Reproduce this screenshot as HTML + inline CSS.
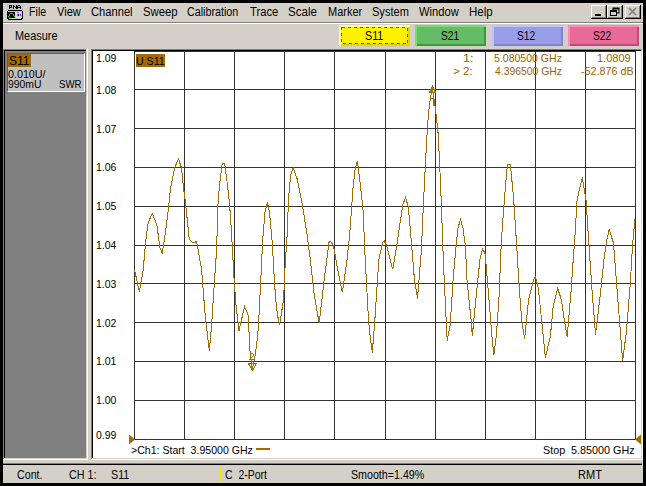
<!DOCTYPE html>
<html><head><meta charset="utf-8">
<style>
html,body{margin:0;padding:0;}
body{width:646px;height:486px;background:#000;position:relative;overflow:hidden;font-family:"Liberation Sans",sans-serif;}
.a{position:absolute;}
.t{position:absolute;white-space:nowrap;transform-origin:0 0;font-family:"Liberation Sans",sans-serif;}
</style></head><body>
<div class="a" style="left:3px;top:3px;width:640px;height:480px;background:#d4d0c8"></div>
<!-- menu separator -->
<div class="a" style="left:3px;top:22px;width:640px;height:1px;background:#808080"></div>
<div class="a" style="left:3px;top:23px;width:640px;height:1px;background:#fff"></div>
<!-- PNA icon -->
<svg class="a" style="left:0;top:0" width="30" height="24" viewBox="0 0 30 24" shape-rendering="crispEdges">
 <rect x="7" y="4" width="16" height="6" fill="#c4c4c4"/>
 <g fill="#000"><rect x="9" y="5" width="1" height="1"/><rect x="10" y="5" width="1" height="1"/><rect x="11" y="5" width="1" height="1"/><rect x="9" y="6" width="1" height="1"/><rect x="11" y="6" width="1" height="1"/><rect x="9" y="7" width="1" height="1"/><rect x="10" y="7" width="1" height="1"/><rect x="11" y="7" width="1" height="1"/><rect x="9" y="8" width="1" height="1"/><rect x="13" y="5" width="1" height="1"/><rect x="16" y="5" width="1" height="1"/><rect x="13" y="6" width="1" height="1"/><rect x="14" y="6" width="1" height="1"/><rect x="16" y="6" width="1" height="1"/><rect x="13" y="7" width="1" height="1"/><rect x="15" y="7" width="1" height="1"/><rect x="16" y="7" width="1" height="1"/><rect x="13" y="8" width="1" height="1"/><rect x="16" y="8" width="1" height="1"/><rect x="18" y="5" width="1" height="1"/><rect x="19" y="5" width="1" height="1"/><rect x="17" y="6" width="1" height="1"/><rect x="20" y="6" width="1" height="1"/><rect x="17" y="7" width="1" height="1"/><rect x="18" y="7" width="1" height="1"/><rect x="19" y="7" width="1" height="1"/><rect x="20" y="7" width="1" height="1"/><rect x="17" y="8" width="1" height="1"/><rect x="20" y="8" width="1" height="1"/></g>
 <rect x="7" y="10" width="16" height="10" fill="#000"/>
 <rect x="7" y="10" width="1" height="1" fill="#fff"/><rect x="22" y="10" width="1" height="1" fill="#fff"/>
 <rect x="8" y="11" width="14" height="1" fill="#c8c8c8"/>
 <rect x="15" y="12" width="7" height="6" fill="#d8d8d8"/>
 <rect x="8" y="16" width="1" height="1" fill="#00ff00"/><rect x="9" y="14" width="1" height="2" fill="#00ff00"/><rect x="10" y="13" width="3" height="1" fill="#00ff00"/><rect x="13" y="14" width="1" height="2" fill="#00ff00"/><rect x="14" y="16" width="1" height="1" fill="#00ff00"/>
 <rect x="15" y="14" width="1" height="2" fill="#ffff00"/><rect x="17" y="14" width="1" height="2" fill="#00ff00"/><rect x="18" y="14" width="1" height="2" fill="#0000ff"/><rect x="20" y="14" width="1" height="2" fill="#ff00ff"/>
 <rect x="17" y="12" width="2" height="1" fill="#888"/>
 <rect x="9" y="18" width="12" height="1" fill="#d0d0d0"/>
 <rect x="7" y="19" width="1" height="1" fill="#d4d0c8"/><rect x="22" y="19" width="1" height="1" fill="#d4d0c8"/>
</svg>
<!-- MDI buttons -->
<svg class="a" style="left:590px;top:4px" width="52" height="16" viewBox="0 0 52 16">
 <g id="btn">
 </g>
 <rect x="1" y="1" width="16" height="14" fill="#000"/><rect x="1" y="1" width="15" height="13" fill="#fff"/><rect x="2" y="2" width="14" height="12" fill="#808080"/><rect x="2" y="2" width="13" height="11" fill="#d4d0c8"/>
 <rect x="17" y="1" width="16" height="14" fill="#000"/><rect x="17" y="1" width="15" height="13" fill="#fff"/><rect x="18" y="2" width="14" height="12" fill="#808080"/><rect x="18" y="2" width="13" height="11" fill="#d4d0c8"/>
 <rect x="35" y="1" width="16" height="14" fill="#000"/><rect x="35" y="1" width="15" height="13" fill="#fff"/><rect x="36" y="2" width="14" height="12" fill="#808080"/><rect x="36" y="2" width="13" height="11" fill="#d4d0c8"/>
 <rect x="5" y="10" width="6" height="2" fill="#000"/>
 <rect x="23" y="4" width="6" height="5" fill="none" stroke="#000" stroke-width="1"/><rect x="23" y="4" width="6" height="1.5" fill="#000"/>
 <rect x="20.5" y="6.5" width="6" height="5" fill="#d4d0c8" stroke="#000" stroke-width="1"/><rect x="20.5" y="6.5" width="6" height="1.5" fill="#000"/>
 <path d="M39 4 L46 11 M46 4 L39 11" stroke="#808080" stroke-width="1.6"/>
</svg>
<!-- toolbar buttons -->
<div class="a" style="left:339px;top:25px;width:71px;height:21px;background:#fff200;box-shadow:inset 2px 2px 0 #ffff88, inset -2px -2px 0 #e6d600"></div>
<svg class="a" style="left:339px;top:25px" width="71" height="21" viewBox="0 0 71 21" shape-rendering="crispEdges">
<path d="M2.5 2.5 H68.5 V18.5 H2.5 Z" fill="none" stroke="#505878" stroke-width="1" stroke-dasharray="3 3"/>
</svg>
<div class="a" style="left:415px;top:25px;width:71px;height:21px;background:#66bb66;box-shadow:inset 2px 2px 0 #70e070, inset -2px -2px 0 #3a9a3a"></div>
<div class="a" style="left:492px;top:25px;width:71px;height:21px;background:#9a9ee8;box-shadow:inset 2px 2px 0 #c0c0ff, inset -2px -2px 0 #7c84cc"></div>
<div class="a" style="left:568px;top:25px;width:71px;height:21px;background:#e86a98;box-shadow:inset 2px 2px 0 #ff88b8, inset -2px -2px 0 #c04a78"></div>
<!-- left panel -->
<div class="a" style="left:3px;top:49px;width:85px;height:411px;background:#808080"></div>
<div class="a" style="left:3px;top:49px;width:84px;height:1px;background:#808080"></div>
<div class="a" style="left:4px;top:50px;width:82px;height:1px;background:#000"></div>
<div class="a" style="left:4px;top:50px;width:1px;height:408px;background:#000"></div>
<div class="a" style="left:86px;top:49px;width:1px;height:410px;background:#d4d0c8"></div>
<div class="a" style="left:87px;top:49px;width:1px;height:411px;background:#fff"></div>
<div class="a" style="left:4px;top:458px;width:83px;height:1px;background:#d4d0c8"></div>
<div class="a" style="left:3px;top:459px;width:85px;height:1px;background:#fff"></div>
<!-- info box -->
<div class="a" style="left:7px;top:53px;width:76px;height:37px;background:#c0c0c0;border-top:1px solid #606060;border-left:1px solid #606060;border-right:1px solid #fff;border-bottom:1px solid #fff"></div>
<div class="a" style="left:8px;top:54px;width:23px;height:13px;background:#a26c00"></div>
<!-- chart frame -->
<div class="a" style="left:91px;top:49px;width:552px;height:411px;background:#fff"></div>
<div class="a" style="left:91px;top:49px;width:551px;height:1px;background:#808080"></div>
<div class="a" style="left:91px;top:49px;width:1px;height:410px;background:#808080"></div>
<div class="a" style="left:92px;top:50px;width:549px;height:1px;background:#000"></div>
<div class="a" style="left:92px;top:50px;width:1px;height:408px;background:#000"></div>
<div class="a" style="left:641px;top:50px;width:1px;height:409px;background:#d4d0c8"></div>
<div class="a" style="left:92px;top:458px;width:550px;height:1px;background:#d4d0c8"></div>
<div class="a" style="left:642px;top:49px;width:1px;height:411px;background:#fff"></div>
<div class="a" style="left:91px;top:459px;width:552px;height:1px;background:#fff"></div>
<!-- status bar separator -->
<div class="a" style="left:3px;top:463px;width:639px;height:1px;background:#808080"></div>
<div class="a" style="left:3px;top:464px;width:639px;height:1px;background:#000"></div>
<div class="a" style="left:111px;top:467px;width:108px;height:13px;border:1px solid #f0e800"></div>
<!-- chart svg -->
<svg class="a" style="left:0;top:0" width="646" height="486" viewBox="0 0 646 486">
<rect x="136" y="54" width="29" height="13" fill="#a26c00"/>
<rect x="134" y="51" width="1" height="389" fill="#333"/>
<rect x="184" y="51" width="1" height="389" fill="#333"/>
<rect x="234" y="51" width="1" height="389" fill="#333"/>
<rect x="284" y="51" width="1" height="389" fill="#333"/>
<rect x="334" y="51" width="1" height="389" fill="#333"/>
<rect x="385" y="51" width="1" height="389" fill="#333"/>
<rect x="435" y="51" width="1" height="389" fill="#333"/>
<rect x="485" y="51" width="1" height="389" fill="#333"/>
<rect x="535" y="51" width="1" height="389" fill="#333"/>
<rect x="585" y="51" width="1" height="389" fill="#333"/>
<rect x="635" y="51" width="1" height="389" fill="#333"/>
<rect x="134" y="51" width="502" height="1" fill="#333"/>
<rect x="134" y="89" width="502" height="1" fill="#333"/>
<rect x="134" y="128" width="502" height="1" fill="#333"/>
<rect x="134" y="167" width="502" height="1" fill="#333"/>
<rect x="134" y="206" width="502" height="1" fill="#333"/>
<rect x="134" y="245" width="502" height="1" fill="#333"/>
<rect x="134" y="283" width="502" height="1" fill="#333"/>
<rect x="134" y="322" width="502" height="1" fill="#333"/>
<rect x="134" y="361" width="502" height="1" fill="#333"/>
<rect x="134" y="400" width="502" height="1" fill="#333"/>
<rect x="134" y="439" width="502" height="1" fill="#333"/>
<path d="M134.6 270.0 L139.3 291.6 L143.2 270.0 L145.7 241.0 L148.2 222.6 L152.3 213.4 L156.8 224.7 L159.9 247.3 L162.1 253.4 L163.7 244.3 L166.3 226.0 L168.7 206.5 L170.3 190.0 L172.5 178.0 L174.9 167.0 L178.5 158.8 L181.5 168.0 L183.5 187.6 L185.1 199.9 L187.6 222.9 L189.3 239.4 L192.5 242.3 L196.7 241.9 L201.6 269.7 L205.3 317.0 L209.3 350.5 L211.6 325.8 L213.2 300.0 L216.2 255.8 L217.3 229.7 L217.5 215.8 L218.3 197.7 L219.8 183.0 L222.2 163.2 L224.7 163.2 L227.2 183.0 L229.6 204.3 L231.3 229.7 L234.0 277.5 L236.0 305.3 L239.0 330.7 L244.5 306.5 L247.9 313.9 L248.6 322.3 L249.4 340.4 L250.2 353.6 L252.2 370.0 L255.2 355.3 L256.8 343.7 L258.5 325.6 L260.8 279.5 L262.7 239.9 L265.0 212.0 L267.3 202.4 L269.5 212.0 L271.7 236.0 L272.4 244.7 L274.0 274.3 L275.7 299.7 L277.5 315.0 L279.6 325.0 L283.6 299.3 L285.1 265.7 L287.1 236.0 L288.5 199.4 L290.5 176.0 L293.1 167.7 L297.4 179.6 L302.4 205.4 L307.3 236.0 L310.3 259.7 L314.3 295.4 L319.2 323.3 L324.2 279.5 L329.1 241.9 L330.7 241.5 L333.5 245.9 L337.0 265.7 L342.4 292.4 L347.0 259.7 L349.6 236.0 L352.9 189.5 L355.0 170.0 L357.3 160.8 L360.0 181.8 L363.0 209.5 L365.3 261.0 L368.5 319.6 L370.0 335.0 L372.3 352.5 L374.9 319.3 L378.8 259.8 L382.8 242.0 L384.2 240.8 L386.7 246.0 L392.7 269.3 L396.7 246.0 L400.6 219.4 L403.0 204.0 L405.6 197.6 L408.0 206.0 L409.6 221.0 L414.3 278.0 L417.5 298.5 L421.4 249.9 L423.8 195.7 L425.4 165.0 L427.4 127.5 L429.3 105.7 L432.3 86.5 L436.3 115.6 L438.3 135.4 L440.8 189.7 L443.2 256.0 L444.2 279.6 L447.2 340.6 L450.2 325.2 L453.1 279.6 L456.1 246.0 L458.0 228.0 L460.5 219.4 L463.0 228.0 L465.4 246.0 L467.0 279.6 L471.0 319.3 L472.3 335.7 L476.9 289.5 L479.9 259.8 L482.6 248.9 L485.2 253.9 L486.5 269.7 L489.0 299.5 L491.9 336.0 L493.9 355.2 L496.3 336.0 L498.9 299.5 L501.4 240.0 L503.8 207.5 L506.0 180.0 L507.5 164.3 L510.4 164.3 L513.7 199.5 L516.7 246.0 L518.7 279.6 L521.6 319.3 L524.6 339.3 L528.6 299.5 L533.5 279.6 L535.5 276.7 L538.5 289.5 L541.5 319.3 L545.4 357.6 L550.4 336.0 L553.3 305.4 L557.7 288.5 L561.3 299.5 L564.2 319.3 L567.2 336.7 L571.2 289.5 L573.2 259.8 L574.7 240.0 L577.1 199.5 L582.3 177.5 L586.0 199.5 L589.0 246.0 L592.0 289.5 L595.5 334.5 L600.9 289.5 L603.9 259.8 L606.8 240.0 L609.2 229.8 L613.5 243.0 L617.5 295.0 L622.6 360.8 L626.4 332.0 L630.5 280.6 L632.5 245.0 L635.0 219.3" fill="none" stroke="#a26c00" stroke-width="1" shape-rendering="crispEdges"/>
<polygon points="129,434.5 135,439.5 129,444.5" fill="#a26c00"/>
<polygon points="641,434.5 635,439.5 641,444.5" fill="#a26c00"/>
<rect x="256" y="448" width="14" height="2" fill="#a26c00"/>
<!-- marker 1 -->
<path d="M432.5 86.5 L429.5 92.5 L435.5 92.5 Z" fill="none" stroke="#a26c00" stroke-width="1" shape-rendering="crispEdges"/>
<path d="M430.5 98.5 L433.5 98.5 M433.5 97 L433.5 105.5" fill="none" stroke="#a26c00" stroke-width="1" shape-rendering="crispEdges"/>
<!-- marker 2 -->
<path d="M248.5 363.5 L256.5 363.5 L252.5 370.5 Z" fill="none" stroke="#a26c00" stroke-width="1" shape-rendering="crispEdges"/>
<path d="M249.5 354.5 L250.5 353.5 L252.5 353.5 L253.5 354.5 L253.5 355.5 L249.5 359.5 L254.5 359.5" fill="none" stroke="#a26c00" stroke-width="1" shape-rendering="crispEdges"/>
</svg>
<span class="t" style="left:29px;top:6.00px;font-size:12px;line-height:12px;color:#000;transform:scaleX(0.8889)" id="m_File">File</span>
<span class="t" style="left:57px;top:6.00px;font-size:12px;line-height:12px;color:#000;transform:scaleX(0.9231)" id="m_View">View</span>
<span class="t" style="left:91px;top:6.00px;font-size:12px;line-height:12px;color:#000;transform:scaleX(0.9302)" id="m_Channel">Channel</span>
<span class="t" style="left:143px;top:6.00px;font-size:12px;line-height:12px;color:#000;transform:scaleX(0.9429)" id="m_Sweep">Sweep</span>
<span class="t" style="left:187px;top:6.00px;font-size:12px;line-height:12px;color:#000;transform:scaleX(0.8929)" id="m_Calibration">Calibration</span>
<span class="t" style="left:250px;top:6.00px;font-size:12px;line-height:12px;color:#000;transform:scaleX(0.9333)" id="m_Trace">Trace</span>
<span class="t" style="left:288px;top:6.00px;font-size:12px;line-height:12px;color:#000;transform:scaleX(0.9655)" id="m_Scale">Scale</span>
<span class="t" style="left:328px;top:6.00px;font-size:12px;line-height:12px;color:#000;transform:scaleX(0.9167)" id="m_Marker">Marker</span>
<span class="t" style="left:372px;top:6.00px;font-size:12px;line-height:12px;color:#000;transform:scaleX(0.9211)" id="m_System">System</span>
<span class="t" style="left:419px;top:6.00px;font-size:12px;line-height:12px;color:#000;transform:scaleX(0.9302)" id="m_Window">Window</span>
<span class="t" style="left:469px;top:6.00px;font-size:12px;line-height:12px;color:#000;transform:scaleX(0.9565)" id="m_Help">Help</span>
<span class="t" style="left:15px;top:30.00px;font-size:12px;line-height:12px;color:#000;transform:scaleX(0.9111)" id="measure">Measure</span>
<span class="t" style="left:365px;top:30.00px;font-size:12px;line-height:12px;color:#000;transform:scaleX(0.8947)" id="b11">S11</span>
<span class="t" style="left:441px;top:30.00px;font-size:12px;line-height:12px;color:#000;transform:scaleX(0.8500)" id="b21">S21</span>
<span class="t" style="left:517px;top:30.00px;font-size:12px;line-height:12px;color:#000;transform:scaleX(0.8500)" id="b12">S12</span>
<span class="t" style="left:593px;top:30.00px;font-size:12px;line-height:12px;color:#000;transform:scaleX(0.8500)" id="b22">S22</span>
<span class="t" style="left:9px;top:55.00px;font-size:12px;line-height:12px;color:#000;transform:scaleX(1.0000)" id="p_s11">S11</span>
<span class="t" style="left:8px;top:69.00px;font-size:11px;line-height:11px;color:#000;transform:scaleX(0.9744)" id="p_l1">0.010U/</span>
<span class="t" style="left:8px;top:79.00px;font-size:11px;line-height:11px;color:#000;transform:scaleX(0.9429)" id="p_l2">990mU</span>
<span class="t" style="left:59px;top:79.00px;font-size:11px;line-height:11px;color:#000;transform:scaleX(0.8750)" id="p_swr">SWR</span>
<span class="t" style="left:96px;top:53.00px;font-size:11px;line-height:11px;color:#000;transform:scaleX(0.9500)" id="y0">1.09</span>
<span class="t" style="left:96px;top:85.00px;font-size:11px;line-height:11px;color:#000;transform:scaleX(0.9500)" id="y1">1.08</span>
<span class="t" style="left:96px;top:124.00px;font-size:11px;line-height:11px;color:#000;transform:scaleX(0.9500)" id="y2">1.07</span>
<span class="t" style="left:96px;top:162.00px;font-size:11px;line-height:11px;color:#000;transform:scaleX(0.9500)" id="y3">1.06</span>
<span class="t" style="left:96px;top:201.00px;font-size:11px;line-height:11px;color:#000;transform:scaleX(0.9500)" id="y4">1.05</span>
<span class="t" style="left:96px;top:240.00px;font-size:11px;line-height:11px;color:#000;transform:scaleX(0.9500)" id="y5">1.04</span>
<span class="t" style="left:96px;top:279.00px;font-size:11px;line-height:11px;color:#000;transform:scaleX(0.9500)" id="y6">1.03</span>
<span class="t" style="left:96px;top:318.00px;font-size:11px;line-height:11px;color:#000;transform:scaleX(0.9500)" id="y7">1.02</span>
<span class="t" style="left:96px;top:356.00px;font-size:11px;line-height:11px;color:#000;transform:scaleX(0.9500)" id="y8">1.01</span>
<span class="t" style="left:96px;top:395.00px;font-size:11px;line-height:11px;color:#000;transform:scaleX(0.9500)" id="y9">1.00</span>
<span class="t" style="left:96px;top:430.00px;font-size:11px;line-height:11px;color:#000;transform:scaleX(0.9524)" id="y10">0.99</span>
<span class="t" style="left:136px;top:56.00px;font-size:11px;line-height:11px;color:#000;transform:scaleX(0.9643)" id="us11">U&nbsp;S11</span>
<span class="t" style="left:463px;top:53.00px;font-size:11px;line-height:11px;color:#9a6200;transform:scaleX(1.1429)" id="mk1">1:</span>
<span class="t" style="left:453px;top:66.00px;font-size:11px;line-height:11px;color:#9a6200;transform:scaleX(1.0588)" id="mk2">&gt;&nbsp;2:</span>
<span class="t" style="left:494px;top:53.00px;font-size:11px;line-height:11px;color:#9a6200;transform:scaleX(0.9571)" id="mf1">5.080500&nbsp;GHz</span>
<span class="t" style="left:495px;top:66.00px;font-size:11px;line-height:11px;color:#9a6200;transform:scaleX(0.9437)" id="mf2">4.396500&nbsp;GHz</span>
<span class="t" style="left:597px;top:53.00px;font-size:11px;line-height:11px;color:#9a6200;transform:scaleX(1.0000)" id="mv1">1.0809</span>
<span class="t" style="left:581px;top:66.00px;font-size:11px;line-height:11px;color:#9a6200;transform:scaleX(0.9811)" id="mv2">-52.876&nbsp;dB</span>
<span class="t" style="left:131px;top:445.00px;font-size:11px;line-height:11px;color:#000;transform:scaleX(0.9603)" id="start">&gt;Ch1:&nbsp;Start&nbsp;&nbsp;3.95000&nbsp;GHz</span>
<span class="t" style="left:543px;top:445.00px;font-size:11px;line-height:11px;color:#000;transform:scaleX(0.9783)" id="stop">Stop&nbsp;&nbsp;5.85000&nbsp;GHz</span>
<span class="t" style="left:17px;top:469.00px;font-size:12px;line-height:12px;color:#000;transform:scaleX(0.8889)" id="cont">Cont.</span>
<span class="t" style="left:69px;top:469.00px;font-size:12px;line-height:12px;color:#000;transform:scaleX(0.8966)" id="ch1">CH&nbsp;1:</span>
<span class="t" style="left:111px;top:469.00px;font-size:12px;line-height:12px;color:#000;transform:scaleX(0.8947)" id="s_s11">S11</span>
<span class="t" style="left:225px;top:469.00px;font-size:12px;line-height:12px;color:#000;transform:scaleX(0.8723)" id="c2p">C&nbsp;&nbsp;2-Port</span>
<span class="t" style="left:351px;top:469.00px;font-size:12px;line-height:12px;color:#000;transform:scaleX(0.8889)" id="smooth">Smooth=1.49%</span>
<span class="t" style="left:578px;top:469.00px;font-size:12px;line-height:12px;color:#000;transform:scaleX(0.9200)" id="rmt">RMT</span>
</body></html>
